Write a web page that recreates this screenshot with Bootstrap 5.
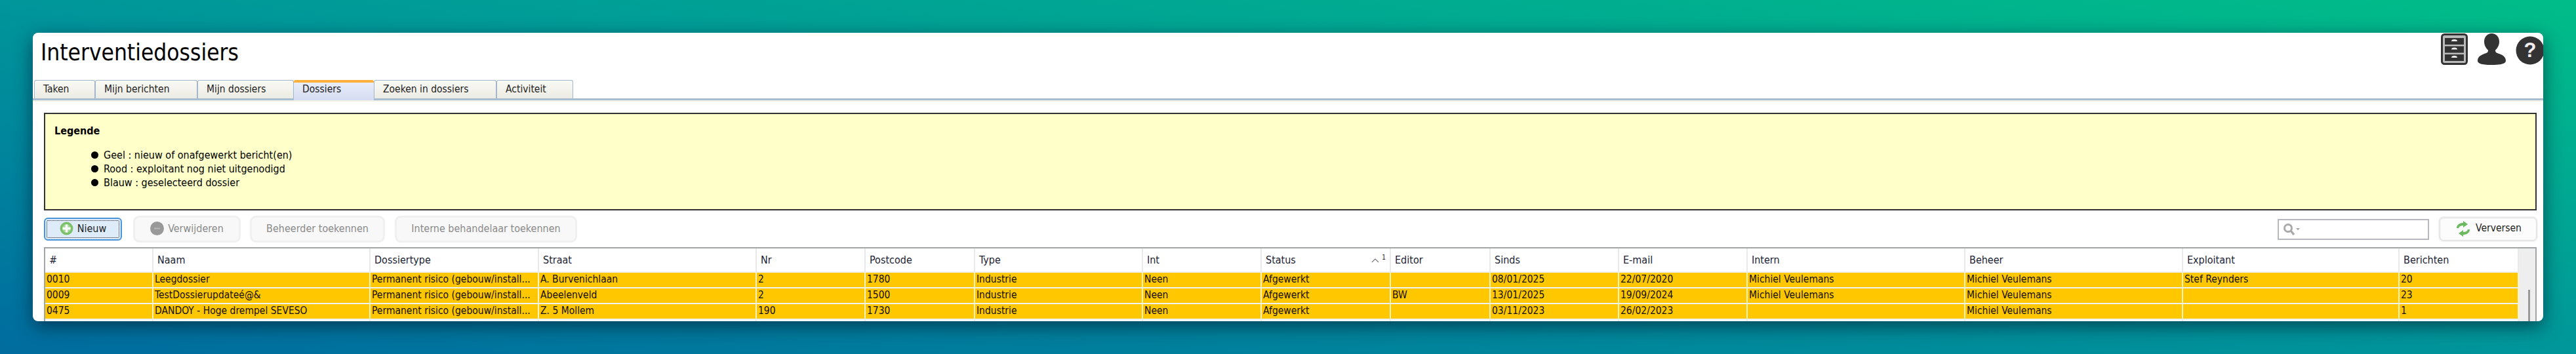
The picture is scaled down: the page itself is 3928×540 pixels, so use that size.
<!DOCTYPE html>
<html lang="nl">
<head>
    <meta charset="UTF-8">
    <title>Interventiedossiers</title>
    <link href="https://cdn.jsdelivr.net/npm/bootstrap@5.3.0/dist/css/bootstrap.min.css" rel="stylesheet">
    <style>
        html, body {
            height: 540px;
            overflow: hidden;
        }

        body {
            padding: 50px;
            background: linear-gradient(to bottom left, #00bd88, #00969a 50%, #006c9f);
            font-family: "DejaVu Sans Condensed", "DejaVu Sans", sans-serif;
            font-stretch: condensed;
            font-size: 16px;
            color: #000;
        }

        .app-window {
            height: 440px;
            overflow: hidden;
            background: #fff;
            border-radius: 8px;
            box-shadow: 0 8px 28px rgba(0, 30, 50, .65);
        }

        .app-window > * {
            flex: none;
        }

        .title-bar {
            height: 72px;
        }

        .app-title {
            margin: 8px 0 0 12px;
            font-size: 35px;
            line-height: 44px;
            font-weight: 400;
            color: #000;
        }

        .head-icons {
            gap: 15px;
            margin-top: 1px;
        }

        /* tabs */
        .tab-strip {
            height: 31px;
            padding-left: 2px;
            border-bottom: 3px solid #a9bdd3;
            box-shadow: 0 2px 0 #f2f1e8;
            flex-wrap: nowrap;
        }

        .tab-strip .nav-link {
            height: 28px;
            margin: 0;
            padding: 3px 0 0 13px;
            font-size: 15.500px;
            line-height: 21px;
            color: #222;
            border: 1px solid #a3b7cc;
            border-bottom: 0;
            border-radius: 3px 3px 0 0;
            background: linear-gradient(#fafaf6, #ecebe3);
        }

        .tab-strip .nav-link.active {
            height: 31px;
            color: #222;
            border: 0;
            border-top: 4px solid #fbb03b;
            padding-top: 0;
            background: linear-gradient(#e9edf8, #d5dcf2);
        }

        /* legend */
        .legend-box {
            height: 149px;
            margin: 19px 10px 0 17px;
            padding: 16px 14px;
            background: #ffffc9;
            border: 2px solid #333;
        }

        .legend-title {
            font-weight: 700;
            margin-bottom: 16px;
            line-height: 20px;
        }

        .legend-list {
            margin: 0;
            padding-left: 56px;
            line-height: 21px;
        }

        .legend-dot {
            width: 11px;
            height: 11px;
            border-radius: 50%;
            background: #000;
        }

        /* toolbar */
        .tool-row {
            height: 37px;
            margin: 10px 10px 9px 17px;
        }

        .tool-btn {
            height: 35px;
            padding: 0 10px 2px;
            font-size: 16px;
            line-height: 1;
            display: flex;
            align-items: center;
            justify-content: center;
            gap: 6px;
            border-radius: 6px;
            white-space: nowrap;
        }

        .tool-new {
            width: 119px;
            color: #222;
            background: #deecfa;
            border: 2px solid #4a94dc;
            outline: 1px dotted #222;
            outline-offset: -5px;
        }

        .tool-off,
        .tool-off:disabled {
            background: #f8f8f8;
            color: #8a8a8a;
            border: 0;
            box-shadow: 0 0 0 3px #f0f0f0;
            opacity: 1;
        }

        .tool-delete {
            width: 158px;
            margin-left: 20px;
        }

        .tool-manager {
            width: 200px;
            margin-left: 20px;
        }

        .tool-intern {
            width: 272px;
            margin-left: 21px;
        }

        .tool-refresh {
            width: 148px;
            margin-left: 16px;
            font-size: 15.500px;
            color: #222;
            background: #fcfcfc;
            border: 1px solid #ddd;
            box-shadow: 0 0 0 2px #f0f0f0;
        }

        .search-field {
            width: 231px;
            height: 32px;
            padding: 0 6px;
            border: 2px solid #b6b8bd;
            background: #fff;
        }

        /* grid */
        .grid-wrap {
            margin: 0 10px 0 17px;
            border: 2px solid #a2a5a8;
            border-bottom: 0;
            height: 120px;
            overflow: hidden;
        }

        .dossier-grid {
            table-layout: fixed;
            width: 3772px;
            margin: 0;
            flex: none;
            border-collapse: separate;
            border-spacing: 0;
        }

        .dossier-grid th,
        .dossier-grid td {
            height: 24px;
            padding: 0 2px 3px;
            font-size: 15.500px;
            font-weight: 400;
            line-height: 18px;
            vertical-align: middle;
            white-space: nowrap;
            overflow: hidden;
            color: #140e00;
            background: #fff;
            border: 0;
            border-right: 2px solid #e9e9e9;
            border-bottom: 2px solid #f1f1f1;
            box-shadow: none;
        }

        .dossier-grid th {
            height: 37px;
            padding: 0 6px;
            font-size: 16px;
            color: #1b2233;
        }

        .dossier-grid tbody tr.row-open td {
            background: #ffc700;
            border-right-color: #fff2c0;
        }

        .sort-mark {
            font-size: 10px;
            line-height: 10px;
            margin-top: -8px;
        }

        .grid-scroll {
            flex: 1;
            background: #eee;
            padding-top: 63px;
        }

        .scroll-thumb {
            width: 3px;
            height: 60px;
            margin-left: 14px;
            background: #999;
        }
    </style>
</head>
<body>
    <div class="app-window d-flex flex-column">
        <!-- Title and top right icons -->
        <div class="title-bar d-flex justify-content-between">
            <h1 class="app-title">Interventiedossiers</h1>
            <div class="head-icons d-flex align-items-start">
                <svg width="41" height="48" viewBox="0 0 41 48">
                    <rect x="1.5" y="1.5" width="38" height="45" rx="4" fill="#bbb" stroke="#333" stroke-width="3"/>
                    <rect x="6" y="7" width="29" height="10" fill="#333"/>
                    <rect x="6" y="19.5" width="29" height="10" fill="#333"/>
                    <rect x="6" y="32" width="29" height="10" fill="#333"/>
                    <path d="M16 12a4.500 3 0 0 1 9 0zM16 24.500a4.500 3 0 0 1 9 0zM16 37a4.500 3 0 0 1 9 0z" fill="#eee"/>
                </svg>
                <svg width="43" height="48" viewBox="0 0 43 48">
                    <path d="M21.500 0c6.500 0 11.500 5 11.500 12.500 0 6-3 10.500-6 13 0 2 .5 3.500 3 4.500 6 2 13 4.500 13 11.500 0 4-5 6.500-21.500 6.500S0 45.500 0 41.500c0-7 7-9.500 13-11.500 2.500-1 3-2.500 3-4.500-3-2.500-6-7-6-13C10 5 15 0 21.500 0z" fill="#333"/>
                </svg>
                <svg width="42" height="44" viewBox="0 0 42 44" class="mt-1">
                    <circle cx="22" cy="22" r="21.500" fill="#333"/>
                    <text x="22" y="32" text-anchor="middle" font-family="Liberation Sans, sans-serif" font-size="31" font-weight="700" fill="#eee">?</text>
                </svg>
            </div>
        </div>

        <!-- Tabs -->
        <ul class="nav tab-strip" id="tabs"></ul>

        <!-- Legend -->
        <div class="legend-box">
            <div class="legend-title">Legende</div>
            <ul class="legend-list list-unstyled">
                <li class="d-flex align-items-center gap-2"><span class="legend-dot"></span>Geel : nieuw of onafgewerkt bericht(en)</li>
                <li class="d-flex align-items-center gap-2"><span class="legend-dot"></span>Rood : exploitant nog niet uitgenodigd</li>
                <li class="d-flex align-items-center gap-2"><span class="legend-dot"></span>Blauw : geselecteerd dossier</li>
            </ul>
        </div>

        <!-- Toolbar -->
        <div class="tool-row d-flex align-items-center">
            <button class="btn tool-btn tool-new" type="button">
                <svg width="21" height="21" viewBox="0 0 21 21">
                    <circle cx="10.500" cy="10.500" r="10" fill="#7cc06a"/>
                    <circle cx="10.500" cy="10.500" r="6.500" fill="#a5d89a"/>
                    <path d="M8.800 4.500h3.400v4.300h4.300v3.400h-4.300v4.300H8.800v-4.300H4.500V8.800h4.300z" fill="#fff"/>
                </svg>
                Nieuw
            </button>
            <button class="btn tool-btn tool-off tool-delete" type="button" disabled>
                <svg width="21" height="21" viewBox="0 0 21 21">
                    <circle cx="10.500" cy="10.500" r="10.500" fill="#999"/>
                    <rect x="6" y="9.500" width="9" height="2" fill="#b5b5b5"/>
                </svg>
                Verwijderen
            </button>
            <button class="btn tool-btn tool-off tool-manager" type="button" disabled>Beheerder toekennen</button>
            <button class="btn tool-btn tool-off tool-intern" type="button" disabled>Interne behandelaar toekennen</button>
            <div class="search-field d-flex align-items-center ms-auto">
                <svg width="28" height="20" viewBox="0 0 28 20">
                    <circle cx="8" cy="8" r="5.500" fill="none" stroke="#aaa" stroke-width="3"/>
                    <path d="M12 12l5 6" stroke="#aaa" stroke-width="3.500"/>
                    <path d="M20 8h6l-3 3.500z" fill="#aaa"/>
                </svg>
            </div>
            <button class="btn tool-btn tool-refresh" type="button">
                <svg width="26" height="24" viewBox="0 0 26 24">
                    <path d="M3 11C3 5.500 8 3 13 3V0l7 5-7 5V7c-3 0-6 1-7 4z" fill="#6db95f"/>
                    <path d="M23 13c0 5.500-5 8-10 8v3l-7-5 7-5v3c3 0 6-1 7-4z" fill="#6db95f"/>
                </svg>
                Verversen
            </button>
        </div>

        <!-- Dossier grid -->
        <div class="grid-wrap d-flex">
            <table class="table dossier-grid">
                <colgroup id="grid-cols"></colgroup>
                <thead><tr id="grid-head"></tr></thead>
                <tbody id="grid-body"></tbody>
            </table>
            <div class="grid-scroll">
                <div class="scroll-thumb"></div>
            </div>
        </div>
    </div>

    <script src="https://cdn.jsdelivr.net/npm/bootstrap@5.3.0/dist/js/bootstrap.bundle.min.js"></script>
    <script>
        const tabs = [
            ['Taken', 93], ['Mijn berichten', 156], ['Mijn dossiers', 147],
            ['Dossiers', 122], ['Zoeken in dossiers', 187], ['Activiteit', 117]
        ];

        const columns = [
            ['#', 165], ['Naam', 331], ['Dossiertype', 257], ['Straat', 332], ['Nr', 166],
            ['Postcode', 167], ['Type', 256], ['Int', 181], ['Status', 197], ['Editor', 152],
            ['Sinds', 196], ['E-mail', 196], ['Intern', 332], ['Beheer', 332],
            ['Exploitant', 330], ['Berichten', 182]
        ];

        const type = 'Permanent risico (gebouw/install...';
        const rows = [
            ['0010', 'Leegdossier', type, 'A. Burvenichlaan', '2', '1780', 'Industrie', 'Neen', 'Afgewerkt', '', '08/01/2025', '22/07/2020', 'Michiel Veulemans', 'Michiel Veulemans', 'Stef Reynders', '20'],
            ['0009', 'TestDossierupdateé@&', type, 'Abeelenveld', '2', '1500', 'Industrie', 'Neen', 'Afgewerkt', 'BW', '13/01/2025', '19/09/2024', 'Michiel Veulemans', 'Michiel Veulemans', '', '23'],
            ['0475', 'DANDOY - Hoge drempel SEVESO', type, 'Z. 5 Mollem', '190', '1730', 'Industrie', 'Neen', 'Afgewerkt', '', '03/11/2023', '26/02/2023', '', 'Michiel Veulemans', '', '1']
        ];

        document.getElementById('tabs').innerHTML = tabs.map(([name, width]) => `
            <li class="nav-item">
                <a class="nav-link ${name === 'Dossiers' ? 'active' : ''}" href="#" style="width:${width}px">${name}</a>
            </li>`).join('');

        document.getElementById('grid-cols').innerHTML = columns.map(c => `<col style="width:${c[1]}px">`).join('');

        document.getElementById('grid-head').innerHTML = columns.map(([name]) => {
            if (name !== 'Status') return `<th>${name}</th>`;
            return `<th><div class="d-flex justify-content-between align-items-center">${name}
                <span class="d-flex align-items-center gap-1">
                    <svg width="12" height="8" viewBox="0 0 12 8"><path d="M1 7l5-5 5 5" fill="none" stroke="#777" stroke-width="1.200"/></svg>
                    <span class="sort-mark">1</span>
                </span></div></th>`;
        }).join('');

        // last row is empty, only its column lines show above the window edge
        document.getElementById('grid-body').innerHTML =
            rows.map(r => `<tr class="row-open">${r.map(v => `<td>${v}</td>`).join('')}</tr>`).join('') +
            `<tr>${columns.map(() => '<td></td>').join('')}</tr>`;
    </script>
</body>
</html>
